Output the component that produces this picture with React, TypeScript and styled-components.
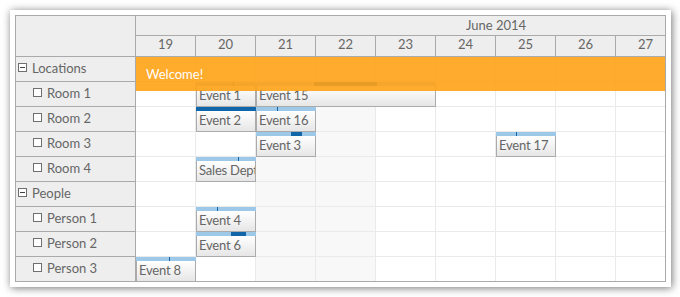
import React from 'react';
import styled, { createGlobalStyle } from 'styled-components';

const GlobalStyle = createGlobalStyle`
  html, body { margin: 0; padding: 0; background: #ffffff; }
  body { font-family: Lato, "Open Sans", sans-serif; }
`;

type Row = { name: string; group?: boolean };
type Ev = { row: number; col: number; span: number; text: string; bar: [number, number] };

const rows: Row[] = [
  { name: 'Locations', group: true },
  { name: 'Room 1' },
  { name: 'Room 2' },
  { name: 'Room 3' },
  { name: 'Room 4' },
  { name: 'People', group: true },
  { name: 'Person 1' },
  { name: 'Person 2' },
  { name: 'Person 3' },
];

const days = [19, 20, 21, 22, 23, 24, 25, 26, 27];
const weekend = new Set([21, 22]);
const COL = 60;

const events: Ev[] = [
  { row: 1, col: 1, span: 1, text: 'Event 1', bar: [37, 38] },
  { row: 1, col: 2, span: 3, text: 'Event 15', bar: [58, 121] },
  { row: 2, col: 1, span: 1, text: 'Event 2', bar: [0, 60] },
  { row: 2, col: 2, span: 1, text: 'Event 16', bar: [21, 22] },
  { row: 3, col: 2, span: 1, text: 'Event 3', bar: [35, 46] },
  { row: 3, col: 6, span: 1, text: 'Event 17', bar: [20, 21] },
  { row: 4, col: 1, span: 1, text: 'Sales Dept', bar: [42, 43] },
  { row: 6, col: 1, span: 1, text: 'Event 4', bar: [21, 22] },
  { row: 7, col: 1, span: 1, text: 'Event 6', bar: [35, 50] },
  { row: 8, col: 0, span: 1, text: 'Event 8', bar: [33, 34] },
];

const Page = styled.div`
  padding: 10px;
`;

const Frame = styled.div`
  width: 661px;
  box-sizing: border-box;
  padding: 5px;
  background: #ffffff;
  box-shadow: 1px 1px 8px rgba(0, 0, 0, 0.55);
`;

const Scheduler = styled.div`
  display: grid;
  grid-template-columns: 120px 529px;
  width: 651px;
  box-sizing: border-box;
  border: 1px solid #aaaaaa;
  font-family: Lato, "Open Sans", sans-serif;
  font-size: 13px;
  color: #666666;
`;

const Corner = styled.div`
  height: 41px;
  box-sizing: border-box;
  background: #eeeeee;
  border-right: 1px solid #aaaaaa;
  border-bottom: 1px solid #aaaaaa;
`;

const TimeHeader = styled.div`
  overflow: hidden;
  background: #eeeeee;
`;

const MonthRow = styled.div`
  height: 20px;
  box-sizing: border-box;
  border-bottom: 1px solid #aaaaaa;
  width: 720px;
`;

const MonthCell = styled.div`
  width: 720px;
  text-align: center;
  line-height: 18px;
`;

const DayRow = styled.div`
  display: flex;
  height: 21px;
  box-sizing: border-box;
  border-bottom: 1px solid #aaaaaa;
`;

const DayCell = styled.div`
  flex: 0 0 ${COL}px;
  box-sizing: border-box;
  border-right: 1px solid #aaaaaa;
  text-align: center;
  line-height: 17px;
`;

const RowHeaders = styled.div`
  display: flex;
  flex-direction: column;
  background: #eeeeee;
  border-right: 1px solid #aaaaaa;
`;

const RowHeaderCell = styled.div<{ $group?: boolean }>`
  display: flex;
  align-items: center;
  gap: 5px;
  height: 25px;
  box-sizing: border-box;
  padding-left: ${(p) => (p.$group ? 2 : 17)}px;
  padding-bottom: 3px;
  border-bottom: 1px solid #aaaaaa;
  white-space: nowrap;
  &:last-child {
    border-bottom: none;
    height: 24px;
  }
`;

const Box = styled.span`
  position: relative;
  width: 9px;
  height: 9px;
  box-sizing: border-box;
  border: 1px solid #6f6f6f;
  background: #ffffff;
  flex: 0 0 9px;
`;

const Minus = styled.span`
  position: absolute;
  left: 1px;
  right: 1px;
  top: 3px;
  height: 1px;
  background: #444444;
`;

const Body = styled.div`
  position: relative;
  overflow: hidden;
  display: flex;
  flex-direction: column;
`;

const GridRow = styled.div`
  position: relative;
  display: flex;
  height: 25px;
  box-sizing: border-box;
  border-bottom: 1px solid #eaeaea;
  &:last-child {
    border-bottom: none;
    height: 24px;
  }
`;

const GridCell = styled.div<{ $weekend?: boolean }>`
  flex: 0 0 ${COL}px;
  box-sizing: border-box;
  border-right: 1px solid #eaeaea;
  background: ${(p) => (p.$weekend ? '#f8f8f8' : '#ffffff')};
`;

const Event = styled.div`
  position: absolute;
  top: 0;
  height: 25px;
  display: flex;
  flex-direction: column;
  z-index: 1;
`;

const EventBar = styled.div`
  position: relative;
  height: 4px;
  background: #9dc8e8;
  flex: 0 0 4px;
`;

const EventBarFill = styled.div`
  position: absolute;
  top: 0;
  bottom: 0;
  background: #1066a8;
`;

const EventBox = styled.div`
  flex: 1;
  box-sizing: border-box;
  border: 1px solid #ababab;
  border-top: none;
  background: linear-gradient(to bottom, #ffffff 0%, #e6e6e6 100%);
  padding-left: 2px;
  line-height: 19px;
  letter-spacing: -0.2px;
  white-space: nowrap;
  overflow: hidden;
  color: #666666;
`;

const Message = styled.div`
  position: absolute;
  top: 0;
  left: 0;
  right: 0;
  z-index: 5;
  padding: 10px;
  line-height: 14px;
  background: #ffa216;
  opacity: 0.9;
  color: #ffffff;
  font-size: 13px;
`;

export default function App() {
  return (
    <>
      <GlobalStyle />
      <Page>
        <Frame>
          <Scheduler>
            <Corner />
            <TimeHeader>
              <MonthRow>
                <MonthCell>June 2014</MonthCell>
              </MonthRow>
              <DayRow>
                {days.map((d) => (
                  <DayCell key={d}>{d}</DayCell>
                ))}
              </DayRow>
            </TimeHeader>
            <RowHeaders>
              {rows.map((r) => (
                <RowHeaderCell key={r.name} $group={r.group}>
                  <Box>{r.group && <Minus />}</Box>
                  <span>{r.name}</span>
                </RowHeaderCell>
              ))}
            </RowHeaders>
            <Body>
              <Message>Welcome!</Message>
              {rows.map((r, ri) => (
                <GridRow key={r.name}>
                  {days.map((d) => (
                    <GridCell key={d} $weekend={weekend.has(d)} />
                  ))}
                  {events
                    .filter((e) => e.row === ri)
                    .map((e) => (
                      <Event key={e.text} style={{ left: e.col * COL, width: e.span * COL }}>
                        <EventBar>
                          <EventBarFill style={{ left: e.bar[0], width: e.bar[1] - e.bar[0] }} />
                        </EventBar>
                        <EventBox>{e.text}</EventBox>
                      </Event>
                    ))}
                </GridRow>
              ))}
            </Body>
          </Scheduler>
        </Frame>
      </Page>
    </>
  );
}
